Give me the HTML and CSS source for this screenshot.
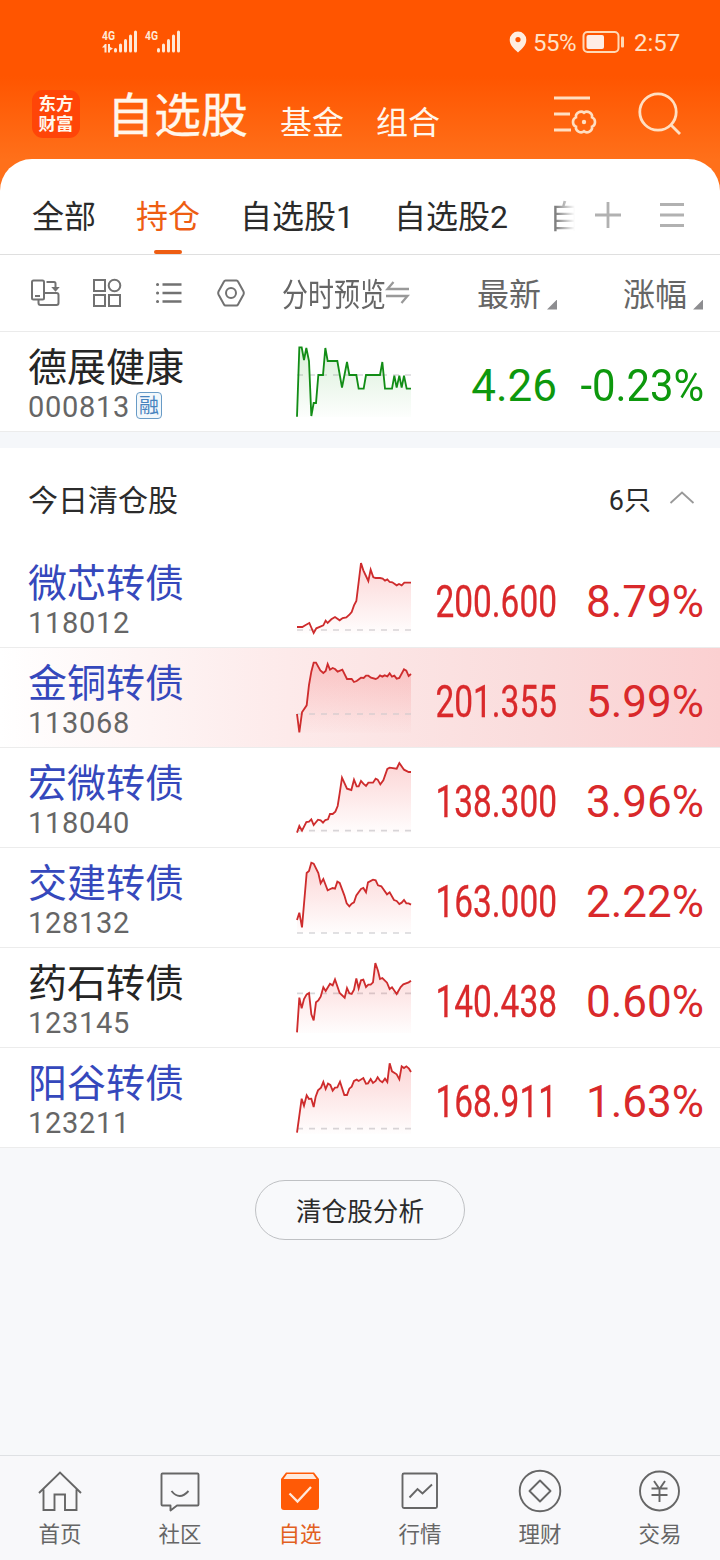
FILE: index.html
```html
<!DOCTYPE html>
<html lang="zh-CN">
<head>
<meta charset="utf-8">
<title>自选股</title>
<link rel="stylesheet" href="styles.css">
</head>
<body>
<svg width="0" height="0" class="defs">
  <defs>
    <linearGradient id="redFill" x1="0" y1="0" x2="0" y2="1"><stop offset="0" stop-color="#f03030" stop-opacity=".2"/><stop offset="1" stop-color="#f03030" stop-opacity=".01"/></linearGradient>
    <linearGradient id="greenFill" x1="0" y1="0" x2="0" y2="1"><stop offset="0" stop-color="#18a018" stop-opacity=".16"/><stop offset="1" stop-color="#18a018" stop-opacity=".01"/></linearGradient>
  </defs>
</svg>
<div class="app">
  <header class="header">
    <div class="status">
      <svg class="signal" width="82" height="30" viewBox="0 0 82 30" fill="#ffe9d6">
        <text x="0" y="12" class="net" textLength="13" lengthAdjust="spacingAndGlyphs">4G</text>
        <path d="M0 19.500l3-3.500h1.500v8.500h-2v-5zM6 16h2v3l3 1.500-3 2v2H6z"/>
        <rect x="12" y="20" width="3" height="4.500" rx="1.500"/><rect x="17" y="15.500" width="3" height="9" rx="1.500"/><rect x="22" y="11" width="3" height="13.500" rx="1.500"/><rect x="27" y="6.500" width="3" height="18" rx="1.500"/><rect x="32" y="2.500" width="3" height="22" rx="1.500"/>
        <text x="43" y="12" class="net" textLength="13" lengthAdjust="spacingAndGlyphs">4G</text>
        <rect x="55" y="20" width="3" height="4.500" rx="1.500"/><rect x="60" y="15.500" width="3" height="9" rx="1.500"/><rect x="65" y="11" width="3" height="13.500" rx="1.500"/><rect x="70" y="6.500" width="3" height="18" rx="1.500"/><rect x="75" y="2.500" width="3" height="22" rx="1.500"/>
      </svg>
      <div class="status-right">
        <svg width="18" height="22" viewBox="0 0 18 22"><path fill="#ffede0" fill-rule="evenodd" d="M9 .5a8.300 8.300 0 0 1 8.300 8.300C17.300 14 13 18 9 21.500 5 18 .7 14 .7 8.800A8.300 8.300 0 0 1 9 .5zm0 5.500a2.600 2.600 0 1 0 0 5.200A2.600 2.600 0 0 0 9 6z"/></svg>
        <span class="battery-text">55%</span>
        <svg class="battery" width="43" height="24" viewBox="0 0 43 24"><rect x="1.500" y="2" width="35" height="20" rx="4" fill="none" stroke="#ffd9b5" stroke-width="2"/><rect x="4.500" y="5" width="17.500" height="14" rx="2" fill="#ffede5"/><rect x="39" y="6.500" width="3" height="11" rx="1" fill="#ffd9b5"/></svg>
        <span class="time">2:57</span>
      </div>
    </div>
    <div class="titlebar">
      <div class="logo"><span>东方</span><span>财富</span></div>
      <h1 class="title">自选股</h1>
      <span class="top-link">基金</span>
      <span class="top-link">组合</span>
      <div class="top-icons">
        <svg width="44" height="48" viewBox="0 0 44 48" fill="none" stroke="#ffdfc2" stroke-width="3"><path d="M0 8h36M0 24h16M0 40h17"/><path stroke-width="2.600" transform="translate(30 32)" d="M8.050-4.650C12-3.200 12 3.200 8.050 4.650 8.800 8.800 3.200 12 0 9.300-3.200 12-8.800 8.800-8.050 4.650-12 3.200-12-3.200-8.050-4.650-8.800-8.800-3.200-12 0-9.300 3.200-12 8.800-8.800 8.050-4.650z"/><circle cx="30" cy="32" r="2.200" fill="#ffdfc2" stroke="none"/></svg>
        <svg width="44" height="48" viewBox="0 0 44 48" fill="none" stroke="#ffdfc2" stroke-width="2.800"><circle cx="18" cy="22" r="18.200"/><path d="M30.500 34.500l9.500 9.500"/></svg>
      </div>
    </div>
  </header>

  <main class="panel">
    <nav class="tabs">
      <span class="tab">全部</span>
      <span class="tab active">持仓</span>
      <span class="tab">自选股1</span>
      <span class="tab">自选股2</span>
      <span class="tab cut">自</span>
      <svg class="tab-icons" width="80" height="30" viewBox="0 0 80 30" fill="none" stroke="#b1b1b1" stroke-width="2.800"><path d="M0 15h26M13 2v26M65 4.500h24M65 15h24M65 25.500h24"/></svg>
    </nav>

    <div class="tools">
      <div class="tool-icons">
        <svg viewBox="0 0 30 30"><rect x="2" y="2.500" width="12" height="19" rx="1.500"/><path d="M5 18h5M8.500 22v3a2 2 0 0 0 2 2h16a2 2 0 0 0 2-2v-8a2 2 0 0 0-2-2H15M16.500 4H24a1.500 1.500 0 0 1 1.500 1.500v6"/><path d="M23.500 10h4l-2 2.200z" fill="#777"/></svg>
        <svg viewBox="0 0 30 30"><rect x="2" y="2" width="11" height="11"/><circle cx="22.500" cy="7.500" r="5.800"/><rect x="2" y="17" width="11" height="11"/><rect x="17" y="17" width="11" height="11"/></svg>
        <svg viewBox="0 0 30 30"><path stroke-width="2.400" d="M8.500 6.500h19M8.500 15h19M8.500 23.500h19"/><path stroke-width="3" stroke-linecap="round" d="M3.500 6.500h.1M3.500 15h.1M3.500 23.500h.1"/></svg>
        <svg viewBox="0 0 30 30"><path stroke-linejoin="round" d="M9.500 2.500h11q1 0 1.500 1l5.500 10q.7 1.500 0 3L22 26.500q-.5 1-1.500 1h-11q-1 0-1.500-1l-5.500-10q-.7-1.500 0-3L8 3.500q.5-1 1.500-1z"/><circle cx="15" cy="15" r="5"/></svg>
      </div>
      <span class="preview">分时预览</span>
      <svg class="swap" width="26" height="30" viewBox="0 0 26 30"><path d="M7.500 4L1.500 11H23M0 18h21.500L15.500 25"/></svg>
      <span class="sort latest">最新<i></i></span>
      <span class="sort change">涨幅<i></i></span>
    </div>

    <section class="stock down">
      <div class="info"><span class="name black">德展健康</span><span class="code">000813<b class="margin-tag">融</b></span></div>
      <svg class="chart" viewBox="0 -9 450 300"><path class="base" d="M51 120H393"/><path class="area" fill="url(#greenFill)" d="M51 245L58 37H65L72 75 79 39 87 78 94 243 101 204H108L115 120H129L136 39 143 78H172L186 158 201 81 208 120H229L236 161H251L258 120H300L307 81 315 161H336L343 122 350 158 358 122 365 158 372 122 380 161H393V246H51z"/><path class="line" d="M51 245L58 37H65L72 75 79 39 87 78 94 243 101 204H108L115 120H129L136 39 143 78H172L186 158 201 81 208 120H229L236 161H251L258 120H300L307 81 315 161H336L343 122 350 158 358 122 365 158 372 122 380 161H393"/></svg>
      <span class="price">4.26</span><span class="pct"><span class="neg">-0.23%</span></span>
    </section>

    <div class="divider"></div>
    <div class="group-head"><span>今日清仓股</span><span class="count">6只</span><svg width="26" height="16" viewBox="0 0 26 16"><path d="M1.500 13L13 2.500 24.500 13" fill="none" stroke="#999" stroke-width="1.800"/></svg></div>

    <section class="stock">
      <div class="info"><span class="name">微芯转债</span><span class="code">118012</span></div>
      <svg class="chart" viewBox="0 9 450 300"><path class="base" d="M51 255H393"/><path class="area" fill="url(#redFill)" d="M51 246L67 246 77 240 88 234 101 264 109 250 130 241 137 227 143 234 154 223 165 216 179 226 188 219 199 217 209 208 215 201 222 181 229 168 243 54 250 76 265 108 272 74 280 97 287 99 300 99 308 101 315 107 322 103 329 111 337 112 350 121 357 117 365 121 373 113H393V265H51z"/><path class="line" d="M51 246L67 246 77 240 88 234 101 264 109 250 130 241 137 227 143 234 154 223 165 216 179 226 188 219 199 217 209 208 215 201 222 181 229 168 243 54 250 76 265 108 272 74 280 97 287 99 300 99 308 101 315 107 322 103 329 111 337 112 350 121 357 117 365 121 373 113H393"/></svg>
      <span class="price long">200.600</span><span class="pct">8.79%</span>
    </section>
    <section class="stock highlight">
      <div class="info"><span class="name">金铜转债</span><span class="code">113068</span></div>
      <svg class="chart" viewBox="0 309 450 300"><path class="base" d="M51 507H393"/><path class="area" fill="url(#redFill)" d="M51 507L58 562 66 502 80 481 87 420 94 380 101 353H108L121 376 130 384 137 378 143 357 150 374 158 369 165 372 173 380 187 374 201 402H215L222 411 230 408 243 398 251 399 258 392H265L273 398 287 402 293 399 300 391 307 395 314 391 322 394 329 385 336 395 343 392 350 401 358 399 372 373 379 377 386 393 393 387V563H51z"/><path class="line" d="M51 507L58 562 66 502 80 481 87 420 94 380 101 353H108L121 376 130 384 137 378 143 357 150 374 158 369 165 372 173 380 187 374 201 402H215L222 411 230 408 243 398 251 399 258 392H265L273 398 287 402 293 399 300 391 307 395 314 391 322 394 329 385 336 395 343 392 350 401 358 399 372 373 379 377 386 393 393 387"/></svg>
      <span class="price long">201.355</span><span class="pct">5.99%</span>
    </section>
    <section class="stock">
      <div class="info"><span class="name">宏微转债</span><span class="code">118040</span></div>
      <svg class="chart" viewBox="0 9 450 300"><path class="base" d="M51 257H393"/><path class="area" fill="url(#redFill)" d="M51 263L58 243 66 257 79 231 87 230 94 223 101 240 114 224 122 226 129 233 136 225 144 223 150 207H158L166 200 173 183 179 145 186 98 201 131 214 135 222 104 230 124H236L243 108 250 116 258 123 265 113H279L287 101 293 104 301 118 310 106 322 72 329 68 350 71 358 54 372 74 386 81H393V264H51z"/><path class="line" d="M51 263L58 243 66 257 79 231 87 230 94 223 101 240 114 224 122 226 129 233 136 225 144 223 150 207H158L166 200 173 183 179 145 186 98 201 131 214 135 222 104 230 124H236L243 108 250 116 258 123 265 113H279L287 101 293 104 301 118 310 106 322 72 329 68 350 71 358 54 372 74 386 81H393"/></svg>
      <span class="price long">138.300</span><span class="pct">3.96%</span>
    </section>
    <section class="stock">
      <div class="info"><span class="name">交建转债</span><span class="code">128132</span></div>
      <svg class="chart" viewBox="0 309 450 300"><path class="base" d="M51 564H393"/><path class="area" fill="url(#redFill)" d="M51 525L58 503 66 547 80 384 87 378 94 353 101 356 115 384 122 415 130 402 143 436 158 429 165 431 172 410 179 414 193 451 200 475 208 484 215 476 222 472 229 451 243 432 250 429 258 442 264 412 279 404 287 406 294 421 304 424 321 448 329 442 342 465 350 468 358 477 365 473 372 465 379 475H386L393 479V563H51z"/><path class="line" d="M51 525L58 503 66 547 80 384 87 378 94 353 101 356 115 384 122 415 130 402 143 436 158 429 165 431 172 410 179 414 193 451 200 475 208 484 215 476 222 472 229 451 243 432 250 429 258 442 264 412 279 404 287 406 294 421 304 424 321 448 329 442 342 465 350 468 358 477 365 473 372 465 379 475H386L393 479"/></svg>
      <span class="price long">163.000</span><span class="pct">2.22%</span>
    </section>
    <section class="stock">
      <div class="info"><span class="name black">药石转债</span><span class="code">123145</span></div>
      <svg class="chart" viewBox="0 9 450 300"><path class="base" d="M51 145H393"/><path class="area" fill="url(#redFill)" d="M51 262L58 158 65 190 72 162 80 148 87 144 94 208 101 226 108 172 115 166 122 155 130 127 137 138 150 116 158 121 165 103 179 144 194 158 201 129 208 145 215 147 222 134 229 100 236 130 243 106 250 104 258 126 265 119H272L279 112 286 54 294 77 300 102 307 99 321 113 329 132 336 127 350 147 362 126 370 118 386 112 393 107V264H51z"/><path class="line" d="M51 262L58 158 65 190 72 162 80 148 87 144 94 208 101 226 108 172 115 166 122 155 130 127 137 138 150 116 158 121 165 103 179 144 194 158 201 129 208 145 215 147 222 134 229 100 236 130 243 106 250 104 258 126 265 119H272L279 112 286 54 294 77 300 102 307 99 321 113 329 132 336 127 350 147 362 126 370 118 386 112 393 107"/></svg>
      <span class="price long">140.438</span><span class="pct">0.60%</span>
    </section>
    <section class="stock">
      <div class="info"><span class="name">阳谷转债</span><span class="code">123211</span></div>
      <svg class="chart" viewBox="0 309 450 300"><path class="base" d="M51 551H393"/><path class="area" fill="url(#redFill)" d="M51 563L65 461 72 482 80 451 87 462 94 461 101 486 107 455 114 436 123 428 130 411 137 432 144 416 151 420 158 437 165 428 172 427 180 410 193 450H201L208 431 215 425 222 408 230 404 236 408 250 399 258 416 264 415 272 402 279 414 287 408 293 397 300 407 307 412 315 401 322 411 329 355 336 379 350 388 358 403 365 364 372 369 379 364 387 371 393 381V566H51z"/><path class="line" d="M51 563L65 461 72 482 80 451 87 462 94 461 101 486 107 455 114 436 123 428 130 411 137 432 144 416 151 420 158 437 165 428 172 427 180 410 193 450H201L208 431 215 425 222 408 230 404 236 408 250 399 258 416 264 415 272 402 279 414 287 408 293 397 300 407 307 412 315 401 322 411 329 355 336 379 350 388 358 403 365 364 372 369 379 364 387 371 393 381"/></svg>
      <span class="price long">168.911</span><span class="pct">1.63%</span>
    </section>

    <div class="footer-area"><button class="analyze">清仓股分析</button></div>
  </main>

  <nav class="bottom">
    <div class="item"><svg viewBox="0 0 44 44"><path d="M1 22L22 1.500 43 22M5.500 18.500V39H16.500V23.500h10.500V39H38.500V18.500"/></svg><span>首页</span></div>
    <div class="item"><svg viewBox="0 0 44 44"><path stroke-linejoin="round" d="M4.500 2.500h35q1 0 1 1v30q0 1-1 1H19l-6.500 5v-5h-8q-1 0-1-1v-30q0-1 1-1z"/><path d="M13.500 20q8 10 17 0"/></svg><span>社区</span></div>
    <div class="item on"><svg viewBox="0 0 44 44"><path d="M8 1.500h28L41 8v28q0 3-3 3H6q-3 0-3-3V8z" fill="#ff5a06" stroke="none"/><path d="M9 3h26l3.500 5h-33z" fill="#ffe9dc" stroke="none"/><path stroke="#ffe9dc" stroke-width="2.300" d="M11.500 22.500l8 8L33 16"/></svg><span>自选</span></div>
    <div class="item"><svg viewBox="0 0 44 44"><rect x="4.500" y="2.500" width="34.500" height="34.500" rx="1.500"/><path d="M11.500 26.500l8-8.500 5 4.500 9.500-9"/></svg><span>行情</span></div>
    <div class="item"><svg viewBox="0 0 44 44"><circle cx="22" cy="20" r="20.300"/><path stroke-linejoin="round" d="M22 9.500L32.500 20 22 30.500 11.500 20z"/></svg><span>理财</span></div>
    <div class="item"><svg viewBox="0 0 44 44"><circle cx="21.500" cy="20" r="19.500"/><path d="M16 10l5.500 8 5.500-8M21.500 18v13M13.500 17.500h16M13.500 24h16"/></svg><span>交易</span></div>
  </nav>
</div>
</body>
</html>
```

FILE: styles.css
```css
* { box-sizing: border-box; }
body { margin: 0; background: #f7f8fa; font-family: Roboto, "Noto Sans CJK SC", sans-serif; color: #2b2b2b; }
.defs { display: block; }
svg { flex: none; display: block; overflow: visible; }
.app { width: 720px; height: 1560px; display: flex; flex-direction: column; overflow: hidden; background: #f7f8fa; }

.header { height: 195px; margin-bottom: -36px; flex: none; background: linear-gradient(#ff5500 76px, #ff701a 160px); }
.status { height: 80px; padding: 28px 40px 0 102px; display: flex; justify-content: space-between; align-items: flex-start; color: #ffe2c8; }
.net { font: 700 13px Roboto, sans-serif; }
.status-right { display: flex; align-items: center; height: 28px; font-size: 25px; line-height: 28px; }
.battery-text { margin-left: 6px; width: 44px; padding-top: 2px; font-size: 24px; letter-spacing: -.5px; }
.battery { margin-left: 5px; }
.time { margin-left: 9px; width: 46px; padding-top: 2px; font-size: 24px; white-space: nowrap; }
.titlebar { height: 79px; padding-left: 32px; display: flex; align-items: flex-start; color: #fff7ec; }
.logo { width: 48px; height: 48px; margin-top: 10px; padding-top: 5px; border-radius: 11px; background: #ff4508; display: flex; flex-direction: column; align-items: center; font-weight: 700; font-size: 17.5px; line-height: 19.5px; }
.title { margin: 0 0 0 27px; font-weight: 400; font-size: 47px; line-height: 72px; -webkit-text-stroke: .3px #fff7ec; }
.top-link { margin-left: 32px; font-size: 32px; line-height: 86px; }
.title + .top-link { margin-left: 32px; }
.top-icons { margin-left: 114px; padding-top: 10px; display: flex; gap: 42px; }

.panel { position: relative; flex: 1; background: #fff; border-radius: 32px 32px 0 0; display: flex; flex-direction: column; }
.tabs { height: 96px; flex: none; padding: 18px 0 0 32px; display: flex; align-items: flex-start; border-bottom: 1px solid #dfdfdf; font-size: 32px; line-height: 80px; white-space: nowrap; }
.tab { height: 77px; margin-right: 40px; display: flex; flex-direction: column; align-items: center; }
.active { color: #ee5d12; }
.active::after { content: ""; flex: none; width: 28px; height: 4px; margin-top: -7px; border-radius: 2px; background: #ee5d12; }
.cut { width: 32px; margin: 0 13px 0 1px; display: block; color: transparent; background: linear-gradient(90deg, #555, #fff 26px); -webkit-background-clip: text; background-clip: text; }
.tab-icons { margin: 23px 0 0 1px; }

.tools { height: 77px; flex: none; padding-left: 30px; display: flex; align-items: center; border-bottom: 1px solid #ebebeb; color: #666; font-size: 32px; line-height: 46px; white-space: nowrap; }
.tool-icons { width: 252px; display: flex; gap: 32px; }
.tool-icons svg { width: 30px; height: 30px; fill: none; stroke: #727272; stroke-width: 2; }
.preview { width: 104px; padding-top: 3px; transform: scaleX(.812); transform-origin: left; }
.swap { fill: none; stroke: #999; stroke-width: 2.3; }
.sort { padding-top: 3px; display: flex; align-items: flex-end; gap: 6px; }
.sort i { width: 10px; height: 10px; margin-bottom: 8px; background: #8d8d90; clip-path: polygon(100% 0, 100% 100%, 0 100%); }
.latest { margin-left: 65px; }
.change { margin-left: 66px; }

.stock { height: 100px; flex: none; display: flex; align-items: center; border-bottom: 1px solid #ececec; color: #d9292b; }
.down { color: #0d980d; }
.highlight { background: linear-gradient(90deg, #fff 0, #fdeaea 40%, #fadcdc 75%, #fbd0d1 100%); }
.info { width: 280px; padding: 2px 0 0 28px; display: flex; flex-direction: column; }
.name { font-size: 39px; line-height: 48px; color: #3548bc; }
.black { color: #252525; }
.code { display: flex; align-items: center; font-size: 29px; line-height: 30px; letter-spacing: .7px; color: #666; }
.margin-tag { width: 26px; height: 27px; margin-left: 6px; margin-top: -2px; border: 1.5px solid #689bc6; border-radius: 4px; background: #f2f8fc; color: #4783be; font-size: 20px; font-weight: 400; line-height: 26px; letter-spacing: 0; text-align: center; }
.chart { width: 150px; height: 100px; }
.line { fill: none; stroke-width: 5.5; stroke-linejoin: miter; }
.chart .line { stroke: #ce2c2d; }
.down .chart .line { stroke: #128d16; }
.base { fill: none; stroke: #d7d7da; stroke-width: 5; stroke-dasharray: 18 18; }
.price, .pct { font-size: 44px; line-height: 56px; text-align: right; white-space: nowrap; margin-top: 8px; }
.price { width: 127px; }
.long { display: flex; justify-content: flex-end; transform: scaleX(.76); transform-origin: right; -webkit-text-stroke: .3px currentColor; }
.pct { width: 147px; }
.neg { display: inline-block; transform: scaleX(.95); transform-origin: right; }

.divider { height: 16px; flex: none; background: #f5f7fa; }
.group-head { height: 100px; flex: none; padding: 0 25px 0 28px; display: flex; align-items: center; font-size: 30px; }
.count { margin-left: auto; margin-right: 18px; font-size: 27px; }
.footer-area { flex: 1; padding-top: 32px; background: #f7f8fa; text-align: center; }
.analyze { width: 210px; height: 60px; padding: 4px 0 0; border: 1px solid #bfc1c4; border-radius: 30px; background: #f8f9fb; color: #2b2b2b; font: 25.6px/54px Roboto, "Noto Sans CJK SC", sans-serif; }

.bottom { position: relative; height: 105px; flex: none; display: flex; background: #f8f8fa; border-top: 1px solid #dfe1e4; color: #666; }
.item { flex: 1; padding-top: 15px; display: flex; flex-direction: column; align-items: center; font-size: 21.5px; line-height: 30px; }
.item svg { width: 44px; height: 44px; margin-bottom: 5px; fill: none; stroke: #666; stroke-width: 1.9; }
.on { color: #e2601f; }
```
